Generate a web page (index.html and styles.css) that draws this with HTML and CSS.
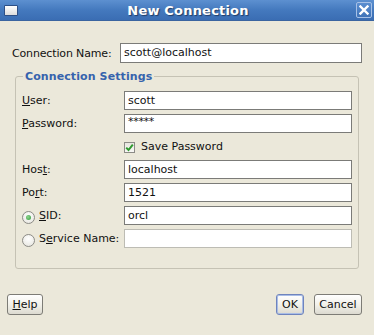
FILE: index.html
```html
<!DOCTYPE html>
<html>
<head>
<meta charset="utf-8">
<title>New Connection</title>
<link rel="stylesheet" href="styles.css">
</head>
<body>
<div class="window">
  <div class="titlebar">
    <span class="win-icon"></span>
    <span class="title">New Connection</span>
    <span class="close">
      <svg width="10" height="10" viewBox="0 0 10 10"><path d="M1.5 1.5 L8.5 8.5 M8.5 1.5 L1.5 8.5" stroke="#fff" stroke-width="2.4" stroke-linecap="square"/></svg>
    </span>
  </div>
  <div class="body">
    <div class="name-row">
      <span class="label">Connection Name:</span>
      <div class="field">scott@localhost</div>
    </div>
    <fieldset class="settings">
      <legend>Connection Settings</legend>
      <div class="grid">
        <span class="label"><u>U</u>ser:</span><div class="field">scott</div>
        <span class="label"><u>P</u>assword:</span><div class="field pw">*****</div>
        <span></span>
        <div class="check">
          <span class="cb"><svg width="9" height="9" viewBox="0 0 9 9"><path d="M1.2 4.6 L3.5 7 L7.8 1.6" fill="none" stroke="#2f9a2f" stroke-width="2"/></svg></span>
          <span>Save Password</span>
        </div>
        <span class="label">Hos<u>t</u>:</span><div class="field">localhost</div>
        <span class="label">Po<u>r</u>t:</span><div class="field">1521</div>
        <span class="label radio-label"><span class="radio on"></span><u>S</u>ID:</span><div class="field">orcl</div>
        <span class="label radio-label"><span class="radio"></span>S<u>e</u>rvice Name:</span><div class="field disabled"></div>
      </div>
    </fieldset>
    <div class="buttons">
      <button class="btn help"><u>H</u>elp</button>
      <span class="spacer"></span>
      <button class="btn ok">OK</button>
      <button class="btn cancel">Cancel</button>
    </div>
  </div>
</div>
</body>
</html>
```

FILE: styles.css
```css
html, body {
  margin: 0;
  padding: 0;
}
body {
  width: 374px;
  height: 335px;
  overflow: hidden;
  background: #ece9d8;
  font-family: "DejaVu Sans", "Liberation Sans", sans-serif;
  font-size: 11px;
  color: #111;
}
.window {
  width: 374px;
  height: 335px;
  display: flex;
  flex-direction: column;
  background: #ebe8da;
}
.titlebar {
  height: 21px;
  flex: none;
  display: flex;
  align-items: center;
  background: linear-gradient(#5d90d0, #4479be 50%, #3a6db3);
  border-bottom: 1px solid #3a64a0;
  box-sizing: border-box;
  position: relative;
}
.win-icon {
  width: 12px;
  height: 9px;
  margin-left: 4px;
  background: linear-gradient(#ffffff, #dcdcdc);
  border: 1px solid #2d4f86;
  border-radius: 1px;
  flex: none;
}
.title {
  flex: 1;
  text-align: center;
  color: #fff;
  font-weight: bold;
  font-size: 13px;
  letter-spacing: 0.2px;
  text-shadow: 1px 1px 1px #203c66;
  margin-left: 2px;
}
.close {
  width: 16px;
  height: 16px;
  margin-right: 2px;
  border: 1px solid #a6c0e6;
  border-radius: 2px;
  background: linear-gradient(#5b8ed0, #3f73b8);
  display: flex;
  align-items: center;
  justify-content: center;
  box-sizing: border-box;
  flex: none;
}
.body {
  flex: 1;
  display: flex;
  flex-direction: column;
  padding: 22px 12px 0 7px;
}
.name-row {
  display: flex;
  align-items: center;
  margin-left: 5px;
  height: 20px;
}
.name-row .label {
  width: 108px;
  letter-spacing: -0.15px;
}
.name-row .field {
  width: 242px;
  height: 20px;
}
.field {
  box-sizing: border-box;
  height: 19px;
  border: 1px solid #7b7b78;
  background: #fff;
  padding: 0 3px;
  line-height: 17px;
  white-space: nowrap;
  overflow: hidden;
  color: #111;
}
.field.pw {
  font-size: 11px;
  line-height: 14px;
  letter-spacing: -0.3px;
}
.field.disabled {
  border-color: #bdbcb4;
}
.settings {
  margin: 7px 3px 0 8px;
  padding: 8px 6px 20px 6px;
  border: 1px solid #c5c2b4;
  border-radius: 3px;
}
.settings legend {
  padding: 0 2px 0 2px;
  margin-left: 1px;
  color: #3663ad;
  font-weight: bold;
  font-size: 11px;
  line-height: 13px;
  letter-spacing: 0.1px;
}
.grid {
  display: grid;
  grid-template-columns: 102px 228px;
  grid-auto-rows: 19px;
  row-gap: 4px;
  align-items: center;
}
.grid .check {
  grid-column: 2;
  display: flex;
  align-items: center;
  height: 19px;
}
.cb {
  width: 11px;
  height: 11px;
  box-sizing: border-box;
  border: 1px solid #8c8b86;
  background: linear-gradient(#e7e6df, #f8f8f5);
  display: flex;
  align-items: center;
  justify-content: center;
  margin-right: 6px;
  margin-top: 2px;
}
.label {
  white-space: nowrap;
}
.radio-label {
  display: flex;
  align-items: center;
}
.radio {
  width: 13px;
  height: 13px;
  box-sizing: border-box;
  border: 1px solid #8c8b86;
  border-radius: 50%;
  background: radial-gradient(circle at 50% 35%, #ffffff, #e4e3dc);
  margin-right: 4px;
  margin-top: 3px;
  flex: none;
  position: relative;
}
.radio.on::after {
  content: "";
  position: absolute;
  left: 3px;
  top: 3px;
  width: 5px;
  height: 5px;
  border-radius: 50%;
  background: radial-gradient(circle at 40% 40%, #8fd68f, #2f9a3a);
}
.radio-label {
  text-decoration-skip-ink: none;
}
.buttons {
  display: flex;
  align-items: center;
  margin-top: 25px;
  gap: 10px;
}
.spacer {
  flex: 1;
}
.btn {
  box-sizing: border-box;
  height: 21px;
  padding: 0;
  font-family: "DejaVu Sans", "Liberation Sans", sans-serif;
  font-size: 11px;
  color: #111;
  border: 1px solid #7d7c76;
  border-radius: 3px;
  background: linear-gradient(#ffffff, #f2f1ea 50%, #dcdad0);
  line-height: 19px;
}
.btn.help {
  width: 36px;
}
.btn.ok {
  width: 28px;
  border-color: #6f84bd;
  box-shadow: inset 0 0 0 1px #a9bde6;
}
.btn.cancel {
  width: 48px;
}
u {
  text-decoration-thickness: 1px;
  text-underline-offset: 1px;
}
```
